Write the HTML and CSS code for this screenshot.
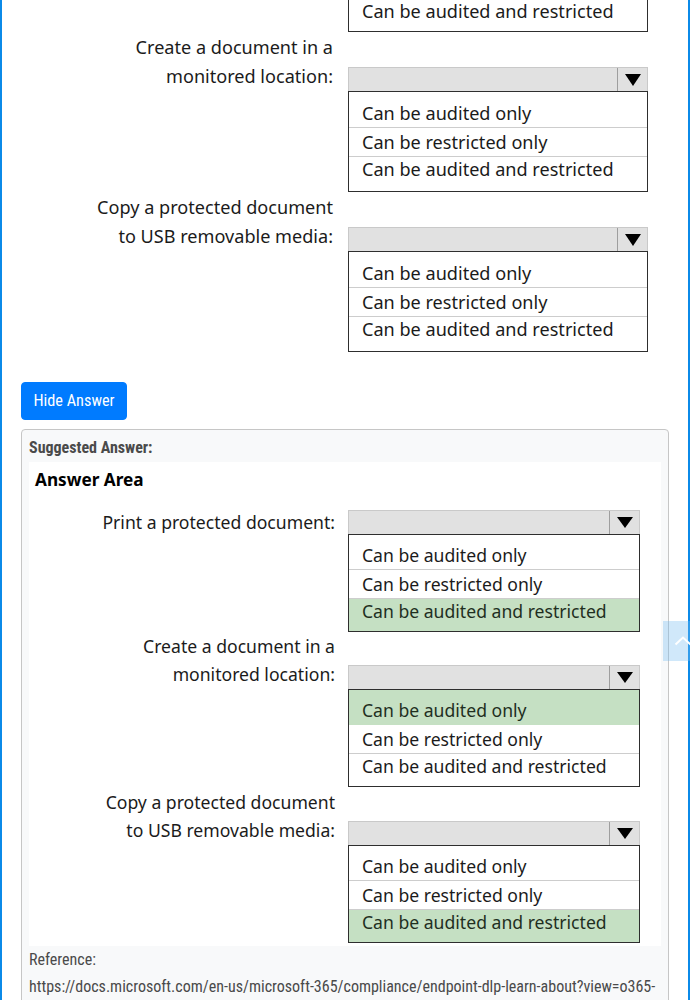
FILE: index.html
```html
<!DOCTYPE html>
<html lang="en">
<head>
<meta charset="utf-8">
<title>Answer</title>
<link rel="stylesheet" href="styles.css">
</head>
<body>
<div class="page">
  <div class="q-area">
    <div class="row">
      <div class="label"></div>
      <div class="tail"><div class="opt">Can be audited and restricted</div></div>
    </div>
    <div class="row">
      <div class="label two">Create a document in a<br>monitored location:</div>
      <div class="ctrl">
        <div class="dd"><span class="dd-btn"><span class="tri"></span></span></div>
        <div class="list">
          <div class="opt">Can be audited only</div>
          <div class="opt">Can be restricted only</div>
          <div class="opt">Can be audited and restricted</div>
        </div>
      </div>
    </div>
    <div class="row">
      <div class="label two">Copy a protected document<br>to USB removable media:</div>
      <div class="ctrl">
        <div class="dd"><span class="dd-btn"><span class="tri"></span></span></div>
        <div class="list">
          <div class="opt">Can be audited only</div>
          <div class="opt">Can be restricted only</div>
          <div class="opt">Can be audited and restricted</div>
        </div>
      </div>
    </div>
  </div>

  <button class="btn" type="button">Hide Answer</button>

  <div class="card">
    <div class="sa-title">Suggested Answer:</div>
    <div class="ans-img">
      <div class="aa-title">Answer Area</div>
      <div class="arow first">
        <div class="label one">Print a protected document:</div>
        <div class="ctrl">
          <div class="dd"><span class="dd-btn"><span class="tri"></span></span></div>
          <div class="list">
            <div class="opt">Can be audited only</div>
            <div class="opt">Can be restricted only</div>
            <div class="opt sel">Can be audited and restricted</div>
          </div>
        </div>
      </div>
      <div class="arow">
        <div class="label two">Create a document in a<br>monitored location:</div>
        <div class="ctrl">
          <div class="dd"><span class="dd-btn"><span class="tri"></span></span></div>
          <div class="list">
            <div class="opt sel">Can be audited only</div>
            <div class="opt">Can be restricted only</div>
            <div class="opt">Can be audited and restricted</div>
          </div>
        </div>
      </div>
      <div class="arow gap">
        <div class="label two">Copy a protected document<br>to USB removable media:</div>
        <div class="ctrl">
          <div class="dd"><span class="dd-btn"><span class="tri"></span></span></div>
          <div class="list">
            <div class="opt">Can be audited only</div>
            <div class="opt">Can be restricted only</div>
            <div class="opt sel">Can be audited and restricted</div>
          </div>
        </div>
      </div>
    </div>
    <div class="ref">Reference:<br>https://docs.microsoft.com/en-us/microsoft-365/compliance/endpoint-dlp-learn-about?view=o365-worldwide</div>
  </div>
</div>
<a class="to-top" href="#top" aria-label="Back to top">
  <svg width="18" height="10" viewBox="0 0 18 10"><path d="M1.5 8.5 L9 1.5 L16.5 8.5" fill="none" stroke="#ffffff" stroke-width="2"/></svg>
</a>
</body>
</html>
```

FILE: styles.css
```css
html, body {
  margin: 0;
  padding: 0;
  background: #ffffff;
}
body {
  height: 1000px;
  overflow: hidden;
  font-family: Roboto, "Liberation Sans", sans-serif;
}
.page {
  box-sizing: border-box;
  min-height: 1000px;
  border-left: 2px solid #0b8ae8;
  border-right: 2px solid #0b8ae8;
  padding: 0 19px;
}

/* question image area */
.q-area {
  display: flex;
  flex-direction: column;
  gap: 1px;
  font-family: "Noto Sans", "Open Sans", sans-serif;
  font-size: 18.1px;
  color: #1b1b1b;
}
.row {
  display: grid;
  grid-template-columns: 312px 300px;
  column-gap: 15px;
}
.label {
  text-align: right;
  white-space: nowrap;
}
.label.two {
  line-height: 29px;
}
.q-area .ctrl {
  padding-top: 34px;
}
.tail {
  box-sizing: border-box;
  border: 1px solid #2e2e2e;
  border-top: none;
  height: 32px;
}
.tail .opt {
  line-height: 22px;
  padding: 0 0 0 13px;
}

.dd {
  box-sizing: border-box;
  height: 24px;
  background: #e1e1e1;
  border: 1px solid #c9c9c9;
  border-bottom: none;
  display: flex;
  justify-content: flex-end;
}
.dd-btn {
  box-sizing: border-box;
  width: 30px;
  height: 100%;
  border-left: 1px solid #9e9e9e;
  display: flex;
  align-items: center;
  justify-content: center;
}
.tri {
  width: 0;
  height: 0;
  border-left: 8.5px solid transparent;
  border-right: 8.5px solid transparent;
  border-top: 12px solid #000000;
}
.list {
  box-sizing: border-box;
  border: 1px solid #2e2e2e;
  background: #ffffff;
  height: 101px;
  display: flex;
  flex-direction: column;
}
.opt {
  line-height: 26px;
  padding: 1px 0 1px 13px;
  white-space: nowrap;
}
.list .opt + .opt {
  border-top: 1px solid #cdcdcd;
}
.list .opt:first-child {
  padding-top: 8px;
}
.list .opt:last-child {
  flex: 1;
  line-height: 24px;
  padding-top: 0;
}
.opt.sel {
  background: #c5e0c3;
  color: #1f2f1f;
}
.list .opt.sel + .opt {
  border-top-color: #c5e0c3;
}

/* button */
.btn {
  display: block;
  margin-top: 30px;
  box-sizing: border-box;
  height: 38px;
  width: 106px;
  padding: 0;
  border: 1px solid #007bff;
  border-radius: 4px;
  background: #007bff;
  color: #ffffff;
  font-family: "Roboto Condensed", Roboto, "Liberation Sans", sans-serif;
  font-stretch: condensed;
  font-size: 16.3px;
  line-height: 24px;
  text-align: center;
}

/* suggested answer card */
.card {
  margin-top: 9px;
  border: 1px solid #c6c6c6;
  border-radius: 4px;
  background: #f8f9fa;
  padding: 7px 7px 0;
}
.sa-title {
  font-family: "Roboto Condensed", Roboto, "Liberation Sans", sans-serif;
  font-stretch: condensed;
  font-weight: 700;
  font-size: 16px;
  line-height: 22px;
  color: #4a4a4a;
}
.ans-img {
  margin-top: 3px;
  background: #ffffff;
  padding: 6px 0 3px;
  font-family: "Noto Sans", "Open Sans", sans-serif;
  font-size: 17.6px;
  color: #1b1b1b;
}
.aa-title {
  font-weight: 700;
  font-size: 17.2px;
  line-height: 24px;
  padding-left: 6px;
  color: #000000;
}
.arow {
  display: grid;
  grid-template-columns: 306px 292px;
  column-gap: 13px;
}
.arow.first {
  margin-top: 18px;
}
.arow.gap {
  margin-top: 1px;
}
.label.one {
  line-height: 24px;
}
.arow .label.two {
  line-height: 28px;
}
.arow .label.one + .ctrl {
  padding-top: 0;
}
.arow .label.two + .ctrl {
  padding-top: 33px;
}
.arow .tri {
  border-left-width: 8px;
  border-right-width: 8px;
  border-top-width: 11px;
}
.arow .list {
  height: 98px;
}
.arow .list .opt:first-child {
  padding-top: 7px;
}

.ref {
  font-family: "Roboto Condensed", Roboto, "Liberation Sans", sans-serif;
  font-stretch: condensed;
  font-size: 16px;
  line-height: 27px;
  color: #4a4a4a;
  overflow: hidden;
}

/* back to top */
.to-top {
  position: fixed;
  left: 663px;
  top: 621px;
  width: 40px;
  height: 40px;
  background: rgba(120, 190, 240, 0.35);
  display: flex;
  align-items: center;
  justify-content: center;
}
```
